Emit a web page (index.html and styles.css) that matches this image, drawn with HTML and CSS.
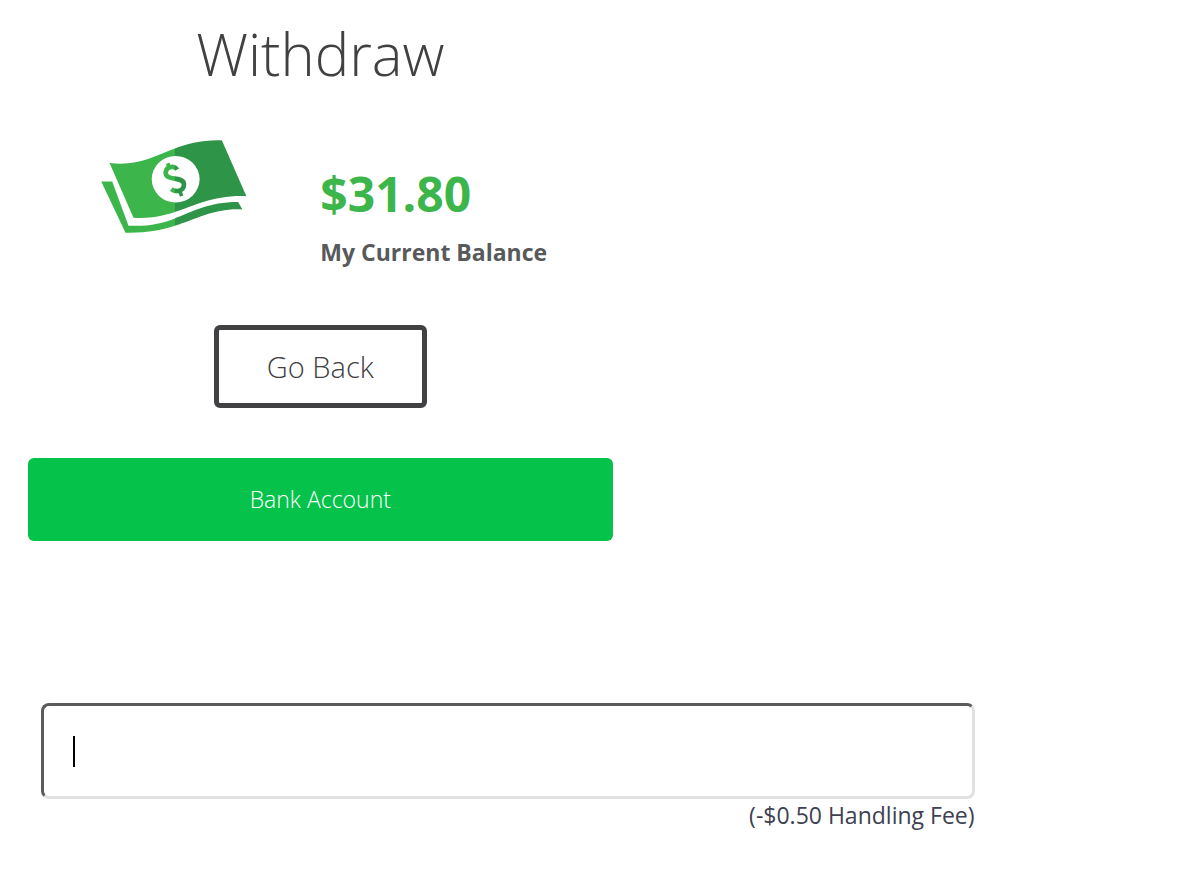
FILE: index.html
```html
<!DOCTYPE html>
<html lang="en">
<head>
<meta charset="utf-8">
<meta name="viewport" content="width=device-width, initial-scale=1">
<title>Withdraw</title>
<link rel="stylesheet" href="styles.css">
</head>
<body>
<main class="page">
  <section class="summary">
    <h1 class="title">Withdraw</h1>
    <div class="balance">
      <svg class="cash" viewBox="35 29 438 280" aria-hidden="true">
        <defs>
          <clipPath id="left-half"><path d="M0 0H257V340H0Z"/></clipPath>
          <clipPath id="right-half"><path d="M257 0H510V340H257Z"/></clipPath>
          <g id="notes">
            <path d="M60 98C190 116 245 25 398 30L472 198C320 192 270 272 132 263Z"/>
            <path d="M35 154H68L117 287C270 294 300 216 447 216L460 238C330 232 280 312 108 308Z"/>
          </g>
          <g id="dollar" fill="none" stroke-width="14">
            <path d="M263 118C256 106 231 107 229 126C227 155 284 136 284 163C283 185 258 186 246 177" />
            <path d="M241 115L235 99M271 181L277 198" stroke-width="11"/>
          </g>
        </defs>
        <g clip-path="url(#left-half)"><use href="#notes" fill="#3cb54a"/></g>
        <g clip-path="url(#right-half)"><use href="#notes" fill="#2e9447"/></g>
        <ellipse cx="259" cy="147" rx="72" ry="70" fill="#fff"/>
        <g clip-path="url(#left-half)"><use href="#dollar" stroke="#3cb54a"/></g>
        <g clip-path="url(#right-half)"><use href="#dollar" stroke="#2e9447"/></g>
      </svg>
      <div class="figures">
        <p class="amount">$31.80</p>
        <p class="caption">My Current Balance</p>
      </div>
    </div>
    <button class="back" type="button">Go Back</button>
    <button class="method" type="button">Bank Account</button>
  </section>
  <form class="entry">
    <div class="field">
      <input class="sum" type="text" inputmode="decimal" aria-label="Withdrawal amount" aria-describedby="fee">
      <span class="caret" aria-hidden="true"></span>
    </div>
    <p class="fee" id="fee">(-$0.50 Handling Fee)</p>
  </form>
</main>
</body>
</html>
```

FILE: styles.css
```css
* {
  box-sizing: border-box;
}

body {
  margin: 0;
  background: #fff;
  color: #414042;
  font-family: "Open Sans", "Noto Sans", sans-serif;
}

h1,
p {
  margin: 0;
}

button {
  font-family: inherit;
  font-weight: 300;
  border-radius: 6px;
  cursor: pointer;
}

.page {
  padding: 14px 28px;
}

.summary {
  display: flex;
  flex-direction: column;
  align-items: center;
  width: 51.1%;
}

.title {
  font-size: 58px;
  font-weight: 300;
  line-height: 80px;
}

.balance {
  display: grid;
  grid-template-columns: 1fr 1fr;
  width: 100%;
  margin-top: 46px;
}

.cash {
  justify-self: center;
  width: 146px;
  height: 93px;
}

.figures {
  padding-top: 24px;
}

.amount {
  color: #3cb54a;
  font-size: 48px;
  font-weight: 700;
  line-height: 60px;
}

.caption {
  color: #58595b;
  font-size: 23px;
  font-weight: 700;
  line-height: 56px;
}

.back {
  margin-top: 45px;
  padding: 0 48px;
  border: 5px solid #414042;
  background: #fff;
  color: #414042;
  font-size: 29px;
  line-height: 73px;
}

.method {
  width: 100%;
  margin-top: 50px;
  padding: 0;
  border: 0;
  background: #04c24a;
  color: #fff;
  font-size: 23px;
  line-height: 83px;
}

.entry {
  width: 81.6%;
  margin: 162px 0 0 13px;
}

.field {
  position: relative;
}

.sum {
  display: block;
  width: 100%;
  height: 96px;
  padding: 0 29px;
  border: 3px solid;
  border-color: #5b5b5b #e1e1e1 #e1e1e1 #5b5b5b;
  border-radius: 8px;
  outline: 0;
  background: #fff;
  color: #000;
  font-family: inherit;
  font-size: 23px;
}

.caret {
  position: absolute;
  top: 33px;
  left: 32px;
  width: 2px;
  height: 31px;
  background: #000;
  pointer-events: none;
}

.sum:focus + .caret {
  display: none;
}

.fee {
  color: #3e4152;
  font-size: 23px;
  line-height: 33px;
  text-align: right;
}
```
